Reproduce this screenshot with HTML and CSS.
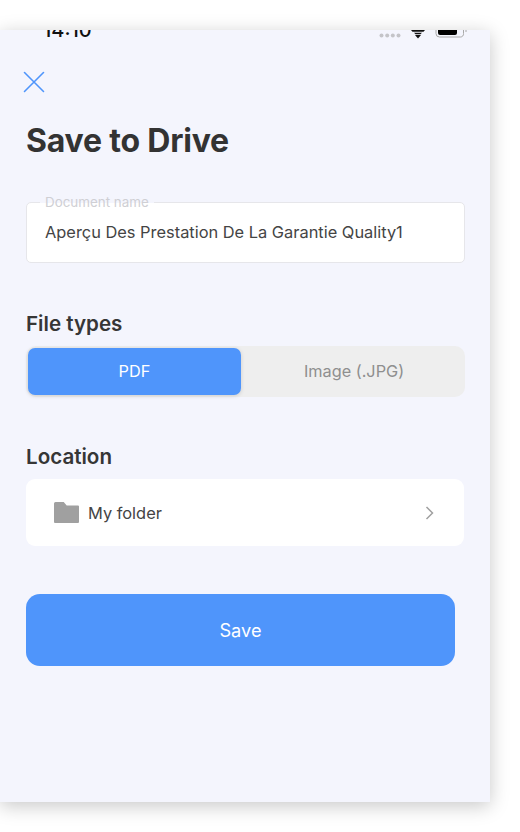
FILE: index.html
```html
<!DOCTYPE html>
<html lang="en">
<head>
<meta charset="utf-8">
<title>Save to Drive</title>
<link rel="stylesheet" href="styles.css">
</head>
<body>
<main class="sheet">
  <div class="status">
    <span class="time">14:10</span>
    <div class="status-icons">
      <svg class="dots" width="22" height="5" viewBox="0 0 22 5"><circle cx="2.5" cy="2.5" r="2"/><circle cx="8.2" cy="2.5" r="2"/><circle cx="13.8" cy="2.5" r="2"/><circle cx="19.5" cy="2.5" r="2"/></svg>
      <svg class="wifi" width="14" height="10" viewBox="0 0 14 10"><path d="M0 0h14l-1.500 1.800H1.500z" fill="#111"/><path d="M3 2.800h8L9.500 4.300H4.500z" fill="#111"/><path d="M4 5h6L7 8.500z" fill="#111"/></svg>
      <svg class="battery" width="32" height="10" viewBox="0 0 32 10"><path d="M1 0v3.500A3.500 3.500 0 0 0 4.500 7h21A3 3 0 0 0 28.500 3.500V0" fill="none" stroke="#a8a8a8"/><path d="M3 0h19v3a2 2 0 0 1-2 2H5a2 2 0 0 1-2-2z" fill="#000"/><path d="M31 0v2" stroke="#a8a8a8"/></svg>
    </div>
  </div>
  <button class="close" type="button" aria-label="Close">
    <svg width="22" height="22" viewBox="0 0 22 22"><path d="M1.500 1.500l19 19M20.500 1.500l-19 19" fill="none" stroke="#4f95fb" stroke-width="1.600" stroke-linecap="round"/></svg>
  </button>
  <h1 class="title">Save to Drive</h1>
  <div class="field">
    <span class="field-label">Document name</span>
    <span class="field-value">Aperçu Des Prestation De La Garantie Quality1</span>
  </div>
  <h2 class="section-title types-title">File types</h2>
  <div class="segments">
    <div class="segment active">PDF</div>
    <div class="segment">Image (.JPG)</div>
  </div>
  <h2 class="section-title location-title">Location</h2>
  <div class="location">
    <svg class="folder" width="25" height="21" viewBox="0 0 25 21"><path d="M0 1.500A1.500 1.500 0 0 1 1.500 0h8.200l3 3.500H24a1 1 0 0 1 1 1V20a1 1 0 0 1-1 1H1a1 1 0 0 1-1-1z" fill="#a0a0a0"/></svg>
    <span class="location-name">My folder</span>
    <svg class="chevron" width="10" height="14" viewBox="0 0 10 14"><path d="M1.500 1l6 6-6 6" fill="none" stroke="#a0a0a0" stroke-width="1.500"/></svg>
  </div>
  <button class="save" type="button">Save</button>
</main>
</body>
</html>
```
FILE: styles.css
```css
* { box-sizing: border-box; }
html, body { margin: 0; height: 100%; background: #fff; }
body { padding-top: 30px; font-family: Inter, "Liberation Sans", sans-serif; overflow: hidden; }
.sheet {
  width: 490px;
  height: 772px;
  padding: 0 26px;
  background: #f4f5fd;
  box-shadow: 0 4px 18px rgba(0, 0, 0, 0.22);
  overflow: hidden;
}
.status {
  height: 20px;
  margin: -10px -26px 0 0;
  padding: 0 23px 0 17px;
  display: flex;
  align-items: center;
  justify-content: space-between;
}
.time { font-size: 20px; font-weight: 500; color: #111; }
.status-icons { display: flex; align-items: flex-start; height: 20px; }
.dots { fill: #c4c4c8; margin: 13px 10px 0 0; }
.wifi { margin: 10px 10px 0 0; }
.battery { margin-top: 10px; }
.close {
  display: block;
  margin: 31px 0 0 -3px;
  padding: 0;
  width: 22px;
  height: 22px;
  border: 0;
  background: none;
}
.close svg { display: block; }
.title { margin: 29px 0 0; font-size: 32px; line-height: 38px; font-weight: 700; color: #333; letter-spacing: -0.2px; }
.field {
  position: relative;
  height: 61px;
  margin: 42px 0 0;
  padding: 0 18px 2px;
  width: 439px;
  display: flex;
  align-items: center;
  background: #fff;
  border: 1px solid #e6e6ea;
  border-radius: 5px;
}
.field-label {
  position: absolute;
  top: -8px;
  left: 13px;
  padding: 0 5px;
  font-size: 13.4px;
  line-height: 15px;
  color: #cfcfd4;
  background: linear-gradient(#f4f5fd 50%, #fff 50%);
}
.field-value { font-size: 16.4px; color: #444; }
.section-title { margin: 0; font-size: 20.600px; line-height: 24px; font-weight: 600; color: #363636; }
.types-title { margin-top: 49px; }
.segments {
  margin-top: 10px;
  width: 439px;
  height: 51px;
  display: flex;
  padding: 2px;
  background: #eeeeee;
  border-radius: 10px;
}
.segment {
  flex: 1;
  display: flex;
  align-items: center;
  justify-content: center;
  font-size: 16.3px;
  color: #8f8f8f;
  border-radius: 7px;
  padding-left: 4px;
  padding-bottom: 2px;
}
.segment.active {
  flex: 0 0 213px;
  padding-left: 0;
  color: #fff;
  background: #4f95fb;
  box-shadow: 0 1px 4px rgba(0, 0, 0, 0.14);
}
.location-title { margin-top: 48px; }
.location {
  margin-top: 10px;
  width: 438px;
  height: 67px;
  padding: 0 29px 0 28px;
  display: flex;
  align-items: center;
  background: #fff;
  border-radius: 9px;
}
.location-name { flex: 1; margin-left: 9px; font-size: 16.4px; font-weight: 400; color: #444; }
.save {
  display: block;
  margin-top: 48px;
  width: 429px;
  height: 72px;
  border: 0;
  border-radius: 14px;
  background: #4f95fb;
  color: #fff;
  font: 400 18.200px Inter, "Liberation Sans", sans-serif;
}
```
